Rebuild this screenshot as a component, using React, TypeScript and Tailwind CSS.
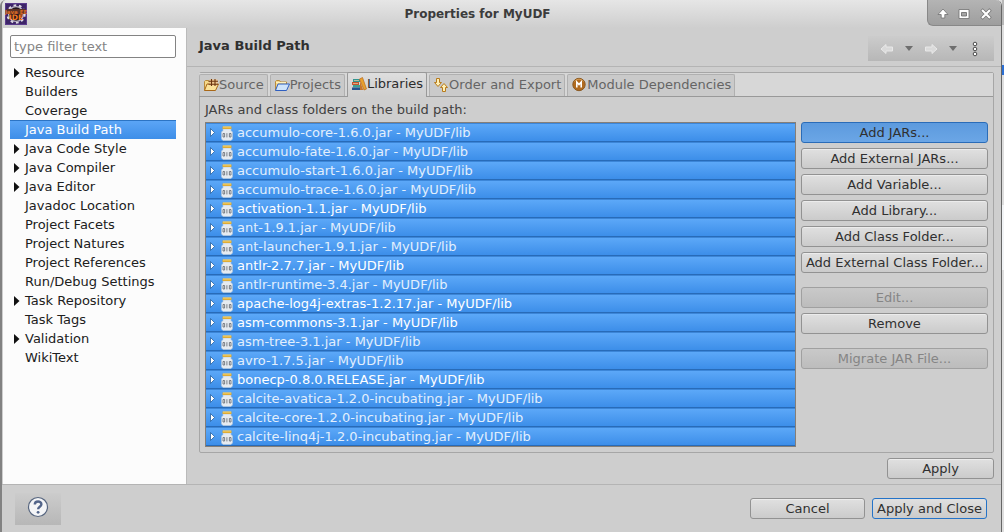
import React from "react";

const tree = [
  { label: "Resource", open: true },
  { label: "Builders" },
  { label: "Coverage" },
  { label: "Java Build Path", selected: true },
  { label: "Java Code Style", open: true },
  { label: "Java Compiler", open: true },
  { label: "Java Editor", open: true },
  { label: "Javadoc Location" },
  { label: "Project Facets" },
  { label: "Project Natures" },
  { label: "Project References" },
  { label: "Run/Debug Settings" },
  { label: "Task Repository", open: true },
  { label: "Task Tags" },
  { label: "Validation", open: true },
  { label: "WikiText" },
];

const jars = [
  { name: "accumulo-core-1.6.0.jar" },
  { name: "accumulo-fate-1.6.0.jar" },
  { name: "accumulo-start-1.6.0.jar" },
  { name: "accumulo-trace-1.6.0.jar" },
  { name: "activation-1.1.jar", bright: true },
  { name: "ant-1.9.1.jar" },
  { name: "ant-launcher-1.9.1.jar" },
  { name: "antlr-2.7.7.jar", bright: true },
  { name: "antlr-runtime-3.4.jar" },
  { name: "apache-log4j-extras-1.2.17.jar", bright: true },
  { name: "asm-commons-3.1.jar", bright: true },
  { name: "asm-tree-3.1.jar" },
  { name: "avro-1.7.5.jar" },
  { name: "bonecp-0.8.0.RELEASE.jar", bright: true },
  { name: "calcite-avatica-1.2.0-incubating.jar" },
  { name: "calcite-core-1.2.0-incubating.jar" },
  { name: "calcite-linq4j-1.2.0-incubating.jar" },
];

function AppIcon() {
  return (
    <svg className="size-[22px] shrink-0" viewBox="0 0 22 22" aria-hidden="true">
      <rect width="22" height="22" fill="#5a3a8c" />
      <rect x="1" y="1" width="20" height="20" fill="#3d2568" />
      <circle cx="11" cy="11" r="8.6" fill="none" stroke="#dcd8e2" strokeWidth="2.2" strokeDasharray="2.7 2.7" />
      <circle cx="11" cy="11" r="7.4" fill="#24161f" stroke="#bdb6c8" strokeWidth="1.400" />
      <path d="M1.500 6h19v5h-19z" fill="#5b3226" />
      <text x="11" y="10.5" textAnchor="middle" fontSize="5.5" fontWeight="700" fill="#d96a24">Java EE</text>
      <text x="11" y="17" textAnchor="middle" fontSize="7.5" fontWeight="700" fill="#f47a20">IDE</text>
    </svg>
  );
}

function FolderPath({ tone }: { tone: "gold" | "blue" }) {
  const line = tone === "gold" ? "#a96818" : "#2f5fc0";
  return (
    <>
      <path d="M1.5 13.5v-9l1-1h3l1 1.5h6v2" fill="#f6d98c" stroke="#b98a3a" />
      <path d="M1.5 13.5 4 7h11.5L12.5 13.5z" fill={tone === "gold" ? "#fbe29a" : "#cfe4fb"} stroke={line} />
    </>
  );
}

function SourceIcon() {
  return (
    <svg className="size-4 shrink-0" viewBox="0 0 16 16" aria-hidden="true">
      <FolderPath tone="gold" />
      <rect x="6.500" y="2.500" width="8" height="6" fill="#f0c890" />
      <path d="M5.500 4.200h9.500M5.500 7.200h9.500M8.500 2v7M12 2v7" stroke="#6c3510" strokeWidth="1.1" />
    </svg>
  );
}

function ProjectsIcon() {
  return (
    <svg className="size-4 shrink-0" viewBox="0 0 16 16" aria-hidden="true">
      <FolderPath tone="blue" />
      <path d="M2 5.500h10" stroke="#fff2bd" />
    </svg>
  );
}

function LibrariesIcon() {
  return (
    <svg className="size-4 shrink-0" viewBox="0 0 16 16" aria-hidden="true">
      <path d="M2 3h7v3H2z" fill="#33958f" />
      <path d="M1 6h7v3H1z" fill="#c4552f" />
      <path d="M2 9h7v2.500H2z" fill="#3f9f93" />
      <path d="M1 11.500h9V14H1z" fill="#27548f" />
      <path d="M3 4.500h5M2 7.500h5" stroke="#f3cba0" strokeWidth=".7" />
      <path d="m8.500 3 3-1.500L15.500 13l-2.500 1z" fill="#e8a02d" stroke="#b96a1c" strokeWidth=".7" />
      <path d="M9 5v9h3.200z" fill="#c7742a" />
    </svg>
  );
}

function OrderIcon() {
  return (
    <svg className="size-4 shrink-0" viewBox="0 0 16 16" aria-hidden="true">
      <path d="M3.500 1.500h3v4h2L5 9.500 1.500 5.500h2z" fill="#fff0b5" stroke="#b77a1d" />
      <path d="M9.500 14.500h3v-4h2L11 6.500l-3.500 4h2z" fill="#fff0b5" stroke="#b77a1d" />
    </svg>
  );
}

function ModuleIcon() {
  return (
    <svg className="size-4 shrink-0" viewBox="0 0 16 16" aria-hidden="true">
      <circle cx="8" cy="7.500" r="6.200" fill="#b06a1f" stroke="#8a5a24" />
      <path d="M3.500 4.500a5.500 5.500 0 0 1 9 0" fill="none" stroke="#d39a52" strokeWidth="1" />
      <path d="M5.800 10.500V5L8 7.500 10.200 5v5.500" fill="none" stroke="#fff" strokeWidth="1.600" />
    </svg>
  );
}

function JarIcon() {
  return (
    <svg className="h-4 w-3 shrink-0" viewBox="0 0 12 16" aria-hidden="true">
      <path d="M2 4h8v1.500l1.500 1.500v7L10 15.500H2L.5 14V7L2 5.500z" fill="#e6ebf0" stroke="#b4c6da" strokeWidth=".6" />
      <path d="M1.500 1.500h9v2.500h-9z" fill="#e0ad34" />
      <path d="M2 2h8" stroke="#fbe08a" strokeWidth=".8" />
      <path d="M2 8.500h1.600v3.500H2zM5.900 8.200v4.200M8.400 8.500H10v3.500H8.400z" fill="none" stroke="#62676e" strokeWidth=".8" />
    </svg>
  );
}

const tabs = [
  { label: "Source", Icon: SourceIcon },
  { label: "Projects", Icon: ProjectsIcon },
  { label: "Libraries", Icon: LibrariesIcon, active: true },
  { label: "Order and Export", Icon: OrderIcon },
  { label: "Module Dependencies", Icon: ModuleIcon },
];

const buttonBase = "h-[21px] w-full shrink-0 rounded-[3px] border text-center leading-[19px] whitespace-nowrap";

function Button({ children, look = "plain" }: { children: React.ReactNode; look?: "plain" | "primary" | "disabled" | "default" }) {
  const style = {
    plain: "border-[#929292] bg-linear-to-b from-[#e0e0e0] to-[#cbcbcb] text-[#303030] shadow-[inset_0_1px_0_#ececec]",
    primary: "border-[#2a6cb8] bg-linear-to-b from-[#5c9ade] to-[#6ba6e6] text-[#303030]",
    disabled: "border-[#a0a0a0] bg-linear-to-b from-[#c9c9c9] to-[#bcbcbc] text-[#858585]",
    default: "border-[#2473c8] bg-linear-to-b from-[#e0e0e0] to-[#cbcbcb] text-[#303030]",
  }[look];
  return (
    <button type="button" disabled={look === "disabled"} className={`${buttonBase} ${style}`}>
      {children}
    </button>
  );
}

function TitleBar() {
  return (
    <header className="flex h-7 shrink-0 items-start bg-linear-to-b from-[#e6e6e6] to-[#cecece]">
      <div className="w-[26px] pt-[3px] pl-[3px]"><AppIcon /></div>
      <h1 className="flex-1 text-center text-xs leading-7 font-bold text-[#3c3c3c]">Properties for MyUDF</h1>
      <div className="flex h-[26px] w-[74px] items-center justify-around rounded-bl-md border-b border-l border-[#888] bg-linear-to-b from-[#b4b4b4] to-[#9e9e9e] px-1 pt-[2px]">
        <button type="button" aria-label="Shade">
          <svg className="size-[14px]" viewBox="0 0 14 14"><path d="M7 2 2 7.500h3.200V11h3.600V7.500H12z" fill="#fff" stroke="#707070" strokeWidth=".8" /></svg>
        </button>
        <button type="button" aria-label="Maximize">
          <svg className="size-[14px]" viewBox="0 0 14 14"><path d="M2 2.500h10v9H2z" fill="#fff" stroke="#707070" strokeWidth=".8" /><path d="M4.500 5.500h5v3.500h-5z" fill="#a6a6a6" stroke="#666" strokeWidth=".8" /></svg>
        </button>
        <button type="button" aria-label="Close">
          <svg className="size-[14px]" viewBox="0 0 14 14"><path d="m2.500 2.500 9 9m0-9-9 9" stroke="#707070" strokeWidth="3.400" /><path d="m3 3 8 8m0-8-8 8" stroke="#fff" strokeWidth="2.200" /></svg>
        </button>
      </div>
    </header>
  );
}

function Sidebar() {
  return (
    <nav aria-label="Property pages" className="flex w-[184px] shrink-0 flex-col border-r border-[#bababa] bg-[#fcfcfc] px-[7px] pt-[7px]">
      <input
        type="text"
        aria-label="Filter"
        placeholder="type filter text"
        className="h-[23px] w-[166px] rounded-[2px] border border-[#838383] bg-white px-[3px] text-[#222] outline-none placeholder:text-[#858585]"
      />
      <ul className="mt-[5px] w-[166px]">
        {tree.map((item) => (
          <li key={item.label}>
            <a
              href="#"
              className={`flex h-[19px] items-center ${item.selected ? "border-t border-[#2c74c4] bg-linear-to-b from-[#5ba5f6] to-[#3d8ee8] text-white" : "text-[#202020]"}`}
            >
              <span className="flex w-[15px] pl-1">
                {item.open && <svg className="h-[10px] w-[6px]" viewBox="0 0 6 10"><path d="M0 0v10l5.500-5z" fill="#111" /></svg>}
              </span>
              {item.label}
            </a>
          </li>
        ))}
      </ul>
    </nav>
  );
}

function PageHeading() {
  return (
    <div className="flex h-[39px] shrink-0 items-start justify-between border-b border-[#b4b4b4] pr-[7px] pl-3">
      <h2 className="pt-[9px] leading-[18px] font-bold text-[#303030]">Java Build Path</h2>
      <div className="mt-2 flex h-[25px] w-[126px] items-center bg-linear-to-b from-[#cccccc] to-[#b7b7b7] pl-3">
        <button type="button" aria-label="Back" disabled>
          <svg className="h-3 w-[14px]" viewBox="0 0 14 12"><path d="M1 6 6 1.500v2.500h6.500v4H6v2.500z" fill="#dadada" stroke="#e8e8e8" /></svg>
        </button>
        <button type="button" aria-label="Back history" className="ml-[11px]">
          <svg className="h-[5px] w-2" viewBox="0 0 8 5"><path d="M0 0h8L4 5z" fill="#6e6e6e" /></svg>
        </button>
        <button type="button" aria-label="Forward" disabled className="ml-[11px]">
          <svg className="h-3 w-[14px]" viewBox="0 0 14 12"><path d="M13 6 8 1.500v2.500H1.500v4H8v2.500z" fill="#dadada" stroke="#e8e8e8" /></svg>
        </button>
        <button type="button" aria-label="Forward history" className="ml-[11px]">
          <svg className="h-[5px] w-2" viewBox="0 0 8 5"><path d="M0 0h8L4 5z" fill="#6e6e6e" /></svg>
        </button>
        <button type="button" aria-label="View menu" className="ml-[15px]">
          <svg className="h-4 w-[6px]" viewBox="0 0 6 16">
            <g fill="#fff" stroke="#4c4c4c"><circle cx="3" cy="3" r="1.800" /><circle cx="3" cy="8" r="1.800" /><circle cx="3" cy="13" r="1.800" /></g>
          </svg>
        </button>
      </div>
    </div>
  );
}

function BuildPath() {
  return (
    <section className="mt-[5px] mr-[7px] ml-3 flex flex-col rounded-[2px] border border-[#a6a6a6]">
      <div role="tablist" className="-ml-px flex h-6 items-end gap-[2px] border-b border-[#999] bg-[#d7d7d7]">
        {tabs.map(({ label, Icon, active }) => (
          <button
            key={label}
            type="button"
            role="tab"
            aria-selected={!!active}
            className={`flex items-center rounded-t-[2px] border border-b-0 px-[3px] pb-[2px] whitespace-nowrap ${
              active ? "-mb-px h-[25px] border-[#999] bg-linear-to-b from-[#dedede] to-[#cecece] text-[#2c2c2c]" : "h-[22px] border-[#b0b0b0] bg-[#cacaca] text-[#656565]"
            }`}
          >
            <Icon />
            {label}
          </button>
        ))}
      </div>
      <div className="flex flex-col px-[5px] pt-1 pb-[5px]">
        <p className="h-[21px] leading-[18px] text-[#404040]">JARs and class folders on the build path:</p>
        <div className="flex gap-[5px]">
          <ul className="min-w-0 flex-1 border border-[#857f78]">
            {jars.map((jar) => (
              <li
                key={jar.name}
                className={`flex h-[19px] items-center border-t border-b border-t-[#3c86d8] border-b-[#286bb8] bg-linear-to-b from-[#5ca8f8] to-[#3c8ee9] pl-1 ${jar.bright ? "text-white" : "text-[#e2effd]"}`}
              >
                <svg className="mr-[6px] h-[9px] w-[5px] shrink-0" viewBox="0 0 5 9"><path d="M.5.500v8L4.500 4.500z" fill="#fff" stroke="#24609f" strokeWidth=".8" /></svg>
                <JarIcon />
                <span className="ml-1">{jar.name} - MyUDF/lib</span>
              </li>
            ))}
          </ul>
          <div className="flex w-[187px] shrink-0 flex-col gap-[5px]">
            <Button look="primary">Add JARs...</Button>
            <Button>Add External JARs...</Button>
            <Button>Add Variable...</Button>
            <Button>Add Library...</Button>
            <Button>Add Class Folder...</Button>
            <Button>Add External Class Folder...</Button>
            <div className="mt-[9px] flex"><Button look="disabled">Edit...</Button></div>
            <Button>Remove</Button>
            <div className="mt-[9px] flex"><Button look="disabled">Migrate JAR File...</Button></div>
          </div>
        </div>
      </div>
    </section>
  );
}

export default function App() {
  return (
    <div className="flex min-h-screen bg-[#dedede] font-['DejaVu_Sans',sans-serif] text-[13px]">
      <main className="flex min-w-0 flex-1 flex-col overflow-hidden rounded-t-md border-r border-l-2 border-l-[#828282] border-r-[#666] bg-[#cecece]">
        <TitleBar />
        <div className="flex border-b border-[#b4b4b4] pl-px">
          <Sidebar />
          <div className="flex min-w-0 flex-1 flex-col pb-[5px]">
            <PageHeading />
            <BuildPath />
            <div className="mt-[5px] mr-[7px] flex w-[107px] self-end"><Button>Apply</Button></div>
          </div>
        </div>
        <footer className="flex items-start justify-between pt-2 pr-[14px] pl-[13px]">
          <button type="button" aria-label="Help" className="flex h-8 w-[46px] items-center justify-center bg-linear-to-b from-[#cccccc] to-[#b7b7b7] pb-1">
            <svg className="size-[22px]" viewBox="0 0 22 22">
              <circle cx="11" cy="11" r="9.500" fill="#f4f5f7" stroke="#56657f" strokeWidth="1.200" />
              <path d="M7.800 8.600C7.800 4.500 14.400 4.700 14.400 8.300c0 2.500-3.300 2.500-3.300 5" fill="none" stroke="#53658a" strokeWidth="2.400" />
              <circle cx="11.100" cy="16.300" r="1.400" fill="#53658a" />
            </svg>
          </button>
          <div className="mt-[5px] flex gap-[7px]">
            <div className="flex w-[115px]"><Button>Cancel</Button></div>
            <div className="flex w-[115px]"><Button look="default">Apply and Close</Button></div>
          </div>
        </footer>
      </main>
      <div className="flex w-[2px] flex-col">
        <div className="h-[25px] bg-[#b8b8b8]" />
        <div className="h-10" />
        <div className="h-[10px] bg-[#2b6fd4]" />
        <div className="h-[130px]" />
        <div className="h-[65px] bg-[#f2f4f6]" />
      </div>
    </div>
  );
}
